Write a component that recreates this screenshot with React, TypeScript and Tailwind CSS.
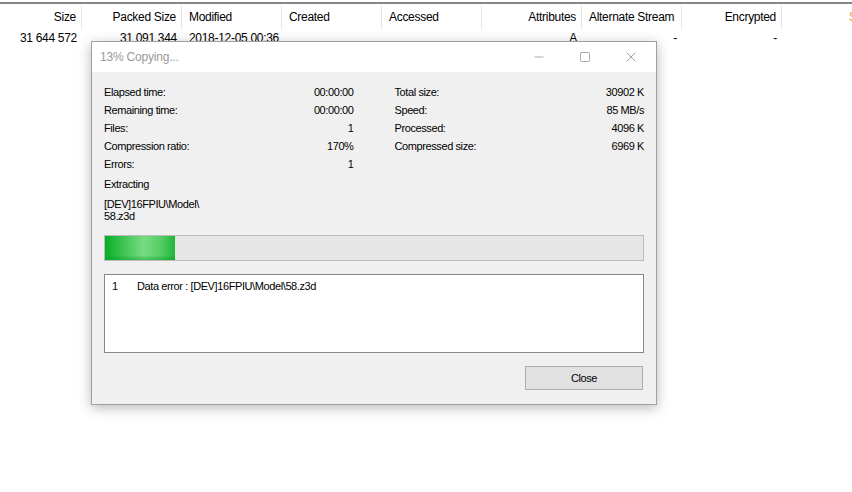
import { Minus, Square, X } from 'lucide-react'

const COLS = [
  { label: 'Size', w: 'w-[82px]', align: 'right' },
  { label: 'Packed Size', w: 'w-[100px]', align: 'right' },
  { label: 'Modified', w: 'w-[100px]', align: 'left' },
  { label: 'Created', w: 'w-[100px]', align: 'left' },
  { label: 'Accessed', w: 'w-[100px]', align: 'left' },
  { label: 'Attributes', w: 'w-[100px]', align: 'right' },
  { label: 'Alternate Stream', w: 'w-[100px]', align: 'left' },
  { label: 'Encrypted', w: 'w-[100px]', align: 'right' },
]

const ROW = ['31 644 572', '31 091 344', '2018-12-05 00:36', '', '', 'A', '-', '-']

const LEFT_STATS = [
  ['Elapsed time:', '00:00:00'],
  ['Remaining time:', '00:00:00'],
  ['Files:', '1'],
  ['Compression ratio:', '170%'],
  ['Errors:', '1'],
]

const RIGHT_STATS = [
  ['Total size:', '30902 K'],
  ['Speed:', '85 MB/s'],
  ['Processed:', '4096 K'],
  ['Compressed size:', '6969 K'],
]

function Stat({ label, value }: { label: string; value: string }) {
  return (
    <div className="flex items-center justify-between h-[18px]">
      <span>{label}</span>
      <span>{value}</span>
    </div>
  )
}

export default function App() {
  return (
    <div className="relative w-[852px] h-[492px] bg-white overflow-hidden font-['Liberation_Sans',Arial,sans-serif] text-black">
      <div className="pt-[2px]">
        <div className="h-[2px] bg-[#858585]" />
      </div>

      {/* column headers */}
      <div className="flex h-[25px] pt-[1px] text-[12px] tracking-[-0.3px]">
        {COLS.map((c) => (
          <div
            key={c.label}
            className={`${c.w} shrink-0 flex items-center border-r border-[#e5e5e5] ${
              c.align === 'right' ? 'justify-end pr-[5px]' : 'pl-[7px]'
            }`}
          >
            {c.label}
          </div>
        ))}
        <div className="flex-1 flex items-center pl-[67px] text-[#e8a040] whitespace-nowrap">S</div>
      </div>

      {/* data row */}
      <div className="flex h-[17px] text-[12px] tracking-[-0.3px]">
        {ROW.map((v, i) => (
          <div
            key={i}
            className={`${COLS[i].w} shrink-0 flex items-center ${
              COLS[i].align === 'right' || v === '-' ? 'justify-end pr-[5px]' : 'pl-[7px]'
            }`}
          >
            {v}
          </div>
        ))}
      </div>

      {/* progress dialog */}
      <div className="absolute left-[91px] top-[41px] w-[566px] h-[364px] border border-[#a0a0a0] bg-[#f0f0f0] shadow-[0_3px_12px_rgba(0,0,0,0.28)] flex flex-col">
        <div className="h-[30px] bg-white flex items-center shrink-0">
          <span className="pl-[8px] text-[12px] text-[#9a9a9a] tracking-[-0.2px] flex-1">13% Copying...</span>
          <div className="flex items-center h-full text-[#8a8a8a]">
            <div className="w-[46px] flex justify-center">
              <Minus size={14} strokeWidth={1.2} />
            </div>
            <div className="w-[46px] flex justify-center">
              <Square size={12} strokeWidth={1.4} />
            </div>
            <div className="w-[46px] flex justify-center mr-[2px]">
              <X size={16} strokeWidth={1.2} />
            </div>
          </div>
        </div>

        <div className="flex-1 px-[12px] pt-[11px] text-[11px] tracking-[-0.4px] text-[#000]">
          <div className="flex">
            <div className="w-[250px] flex flex-col">
              {LEFT_STATS.map(([l, v]) => (
                <Stat key={l} label={l} value={v} />
              ))}
              <div className="h-[19px] flex items-end">Extracting</div>
              <div className="mt-[6px] leading-[12px]">
                [DEV]16FPIU\Model\
                <br />
                58.z3d
              </div>
            </div>
            <div className="w-[250px] ml-[41px] flex flex-col">
              {RIGHT_STATS.map(([l, v]) => (
                <Stat key={l} label={l} value={v} />
              ))}
            </div>
          </div>

          {/* progress bar */}
          <div className="mt-[13px] h-[26px] border border-[#bcbcbc] bg-[#e6e6e6]">
            <div className="h-full w-[70px] bg-[linear-gradient(90deg,#06b025_0%,#3cc250_25%,#78dc84_55%,#55cd64_80%,#1fb53a_100%)] relative">
              <div className="absolute inset-x-0 bottom-0 h-[5px] bg-[linear-gradient(180deg,rgba(6,176,37,0)_0%,rgba(6,160,37,0.5)_100%)]" />
            </div>
          </div>

          {/* error list */}
          <div className="mt-[13px] h-[79px] border border-[#828790] bg-white px-[7px] pt-[3px]">
            <div className="flex">
              <span className="w-[25px]">1</span>
              <span>Data error : [DEV]16FPIU\Model\58.z3d</span>
            </div>
          </div>

          <div className="flex justify-end mt-[13px]">
            <button className="w-[118px] h-[24px] border border-[#adadad] bg-[#e1e1e1] mr-[1px]">Close</button>
          </div>
        </div>
      </div>
    </div>
  )
}
